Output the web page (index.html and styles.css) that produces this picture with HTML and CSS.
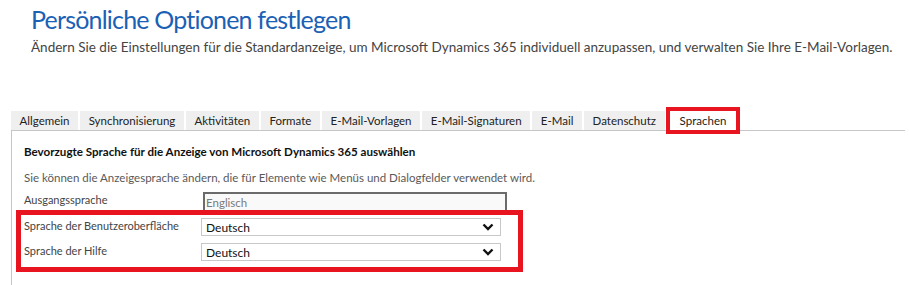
FILE: index.html
```html
<!DOCTYPE html>
<html lang="de">

<head>
  <meta charset="UTF-8">
  <title>Persönliche Optionen festlegen</title>
  <link rel="stylesheet" href="styles.css">
</head>

<body>
  <header class="page-head">
    <h1>Persönliche Optionen festlegen</h1>
    <p>Ändern Sie die Einstellungen für die Standardanzeige, um Microsoft Dynamics 365 individuell anzupassen, und verwalten Sie Ihre E-Mail-Vorlagen.</p>
  </header>

  <ul class="tabs">
    <li>Allgemein</li>
    <li>Synchronisierung</li>
    <li>Aktivitäten</li>
    <li>Formate</li>
    <li>E-Mail-Vorlagen</li>
    <li>E-Mail-Signaturen</li>
    <li>E-Mail</li>
    <li>Datenschutz</li>
    <li class="active">Sprachen</li>
  </ul>

  <div class="panel">
    <h2>Bevorzugte Sprache für die Anzeige von Microsoft Dynamics 365 auswählen</h2>
    <p class="hint">Sie können die Anzeigesprache ändern, die für Elemente wie Menüs und Dialogfelder verwendet wird.</p>

    <div class="row">
      <label>Ausgangssprache</label>
      <div class="readonly">Englisch</div>
    </div>

    <div class="marked">
      <div class="row">
        <label>Sprache der Benutzeroberfläche</label>
        <div class="select">Deutsch
          <svg width="12" height="8" viewBox="0 0 12 8"><polyline points="1.5,1.5 6,6 10.5,1.5" fill="none" stroke="#111" stroke-width="2.4"/></svg>
        </div>
      </div>
      <div class="row">
        <label>Sprache der Hilfe</label>
        <div class="select">Deutsch
          <svg width="12" height="8" viewBox="0 0 12 8"><polyline points="1.5,1.5 6,6 10.5,1.5" fill="none" stroke="#111" stroke-width="2.4"/></svg>
        </div>
      </div>
    </div>
  </div>
</body>

</html>
```

FILE: styles.css
```css
body {
  margin: 0;
  background: #fff;
  font-family: 'Lato', sans-serif;
  color: #444;
}

.page-head {
  padding: 4px 0 0 31px;
  height: 107px;
}

.page-head h1 {
  margin: 0;
  font-size: 25px;
  font-weight: 400;
  line-height: 30px;
  letter-spacing: -0.8px;
  color: #1a61b5;
}

.page-head p {
  margin: 4px 0 0;
  font-size: 13.5px;
  line-height: 18px;
  white-space: nowrap;
  color: #444;
}

.tabs {
  list-style: none;
  margin: 0 4px 0 11px;
  padding: 0;
  display: flex;
  gap: 2px;
  border-bottom: 1px solid #c6c6c6;
}

.tabs li {
  background: #efefef;
  height: 19px;
  line-height: 19px;
  padding: 0 8.6px;
  font-size: 11.5px;
  color: #222;
}

.tabs li.active {
  background: #fff;
  margin-left: 3px;
  padding: 0 10px;
  outline: 4px solid #e8141f;
}

.panel {
  margin-left: 11px;
  border-left: 1px solid #c6c6c6;
  padding: 11px 0 20px 12px;
  height: 124px;
}

.panel h2 {
  margin: 0;
  font-size: 11.6px;
  font-weight: 700;
  color: #111;
  line-height: 20px;
}

.hint {
  margin: 6px 0 4px;
  font-size: 11.5px;
  line-height: 20px;
  color: #595959;
}

.row {
  display: grid;
  grid-template-columns: 177px 300px;
  align-items: start;
}

.row label {
  font-size: 11px;
  line-height: 16px;
  color: #444;
}

.readonly {
  margin-left: 2px;
  width: 304px;
  height: 18px;
  box-sizing: border-box;
  border: 2px solid #6b6b6b;
  border-bottom: none;
  background: #f9f9f9;
  color: #7a7a7a;
  padding-left: 1px;
  line-height: 17px;
  font-size: 11.5px;
}

.marked {
  margin-left: -8px;
  width: 494px;
  border: 5px solid #e8141f;
  padding: 3px 0 6px 3px;
  display: grid;
  row-gap: 7px;
}

.select {
  height: 18px;
  box-sizing: border-box;
  border: 1px solid #c8c8c8;
  background: #fff;
  color: #111;
  padding: 0 6px 0 4px;
  line-height: 17px;
  font-size: 12px;
  display: flex;
  justify-content: space-between;
  align-items: center;
}
```
